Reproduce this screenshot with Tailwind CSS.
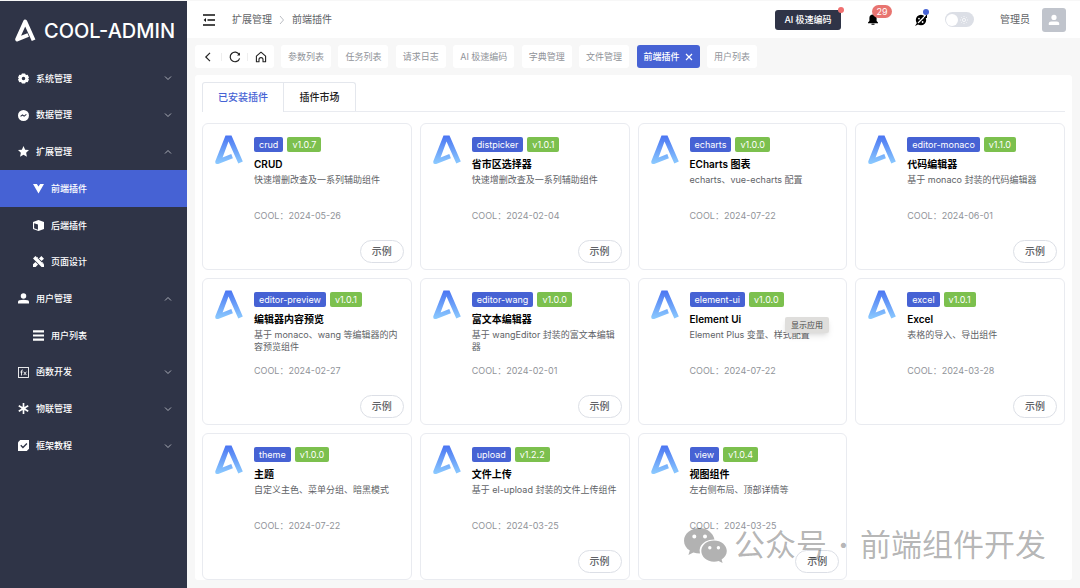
<!DOCTYPE html>
<html lang="zh-CN">
<head>
    <meta charset="UTF-8">
    <meta name="viewport" content="width=device-width, initial-scale=1.0">
    <title>COOL-ADMIN</title>
    <script src="https://cdn.jsdelivr.net/npm/@tailwindcss/browser@4"></script>
</head>
<body class="relative flex min-h-screen bg-[#f7f7f7] font-['Inter','Noto_Sans_CJK_SC',sans-serif] text-[9px] text-[#606266] overflow-x-hidden">
    <svg class="absolute size-0">
        <defs>
            <linearGradient id="logo-fill" x1="0" y1="0" x2="0" y2="1">
                <stop offset="0" stop-color="#4a74f2"/>
                <stop offset="1" stop-color="#8ccbff"/>
            </linearGradient>
            <symbol id="down" viewBox="0 0 8 8"><path d="M1 2.5l3 3 3-3" fill="none" stroke="currentColor" stroke-width=".8"/></symbol>
            <symbol id="up" viewBox="0 0 8 8"><path d="M1 5.5l3-3 3 3" fill="none" stroke="currentColor" stroke-width=".8"/></symbol>
        </defs>
    </svg>

    <aside class="w-[187px] shrink-0 bg-[#2f3447] text-white mt-px">
        <a href="#" class="flex items-center h-[59px] px-[15px] gap-2 text-[20px] font-medium whitespace-nowrap">
            <svg class="w-[21px] h-[23px] shrink-0" viewBox="0 0 21 23" fill="none" stroke="#fff" stroke-width="4" stroke-linejoin="round"><path d="M13.2 16L2.2 20.4 10.2 2.6 18.6 21.2"/></svg>
            COOL-ADMIN
        </a>
        <nav id="menu" class="grid auto-rows-fr h-[404px] font-medium"></nav>
    </aside>

    <div class="flex-1 min-w-0 flex flex-col mt-px">
        <header class="flex items-center h-[37px] bg-white pl-4 pr-[14px]">
            <button aria-label="折叠菜单" class="mr-[17px]">
                <svg class="w-3 h-3" viewBox="0 0 12 12" fill="none" stroke="#111" stroke-width="1.6"><path d="M0 1h12M4.5 6H12M0 11h12"/><path d="M3 4v4L.6 6z" fill="#111" stroke="none"/></svg>
            </button>
            <div class="flex items-center text-[10px]">
                <span>扩展管理</span>
                <svg class="w-2 h-2 mx-[6px] text-[#a8abb2]" viewBox="0 0 8 8"><path d="M2 0l3.5 4L2 8" fill="none" stroke="currentColor" stroke-width=".8"/></svg>
                <span>前端插件</span>
            </div>
            <div class="flex items-center ml-auto">
                <button class="relative bg-[#2f3447] text-white rounded-[3px] h-5 w-[66px] font-medium">AI 极速编码
                    <span class="absolute -top-[3px] -right-[3px] size-[6px] rounded-full bg-[#f07070]"></span>
                </button>
                <button aria-label="通知" class="relative ml-[27px]">
                    <svg class="w-[10px] h-[11px]" viewBox="0 0 10 11" fill="#000"><path d="M5 .5a3.6 3.6 0 0 1 3.6 3.6v3L10 8.6v.6H0v-.6l1.4-1.5v-3A3.6 3.6 0 0 1 5 .5zM3.5 9.8h3v.9h-3z"/></svg>
                    <span class="absolute -top-[9px] left-1 h-[13px] w-5 flex items-center justify-center rounded-full bg-[#e87470] text-white">29</span>
                </button>
                <button aria-label="主题" class="relative ml-[37px]">
                    <svg class="size-3" viewBox="0 0 12 12"><circle cx="6" cy="6" r="5.2" fill="#000"/><path d="M.5 11.5L11.5.5" stroke="#fff" stroke-width="1.2"/><path d="M0 12l2.5-4L4 10zM9 4l3-4v4z" fill="#000"/><circle cx="4" cy="4.6" r=".9" fill="#fff"/><circle cx="7.6" cy="8" r=".9" fill="#fff"/></svg>
                    <span class="absolute -top-[5px] -right-[2px] size-[6px] rounded-full bg-[#4662d4]"></span>
                </button>
                <button role="switch" aria-checked="false" aria-label="暗黑模式" class="ml-[18px] flex items-center justify-between w-[29px] h-[15px] rounded-full bg-[#dcdfe6] px-px">
                    <span class="size-3 rounded-full bg-white"></span>
                    <svg class="size-2 mr-[5px]" viewBox="0 0 8 8" fill="none" stroke="#fff" stroke-width=".7"><circle cx="4" cy="4" r="1.6"/><path d="M4 0v1M4 7v1M0 4h1M7 4h1M1.2 1.2l.7.7M6.1 6.1l.7.7M1.2 6.8l.7-.7M6.1 1.9l.7-.7"/></svg>
                </button>
                <span class="ml-[26px] text-[10px]">管理员</span>
                <span class="ml-3 size-6 rounded-[3px] bg-[#c0c4cc] flex items-center justify-center">
                    <svg class="size-3" viewBox="0 0 12 12" fill="#fff"><circle cx="6" cy="3.4" r="2.6"/><path d="M.8 11V9.6Q.8 7.4 3.2 7.4h5.6q2.4 0 2.4 2.2V11z"/></svg>
                </span>
            </div>
        </header>

        <div class="flex gap-[7px] px-2 py-[7px] text-[#909399]">
            <div class="flex items-center justify-between bg-white rounded-[3px] h-[23px] w-[79px] px-[7px] text-[#222]">
                <button aria-label="后退"><svg class="size-3" viewBox="0 0 12 12" fill="none" stroke="currentColor" stroke-width="1.2"><path d="M8 1.8L3.8 6 8 10.2"/></svg></button>
                <span class="w-px h-2 bg-[#eee]"></span>
                <button aria-label="刷新"><svg class="size-3" viewBox="0 0 12 12" fill="none" stroke="currentColor" stroke-width="1.2"><path d="M10.6 7.3A4.8 4.8 0 1 1 10.2 3.6"/><path d="M11 1.6v3H8z" fill="currentColor" stroke="none"/></svg></button>
                <span class="w-px h-2 bg-[#eee]"></span>
                <button aria-label="首页"><svg class="size-3" viewBox="0 0 12 12" fill="none" stroke="currentColor" stroke-width="1.1" stroke-linejoin="round"><path d="M1.400 5.200L6 1.200l4.600 4V10.800H8V8.600a2 2 0 0 0-4 0v2.200H1.400z"/></svg></button>
            </div>
            <nav id="tabs" class="flex justify-between w-[476px]"></nav>
        </div>

        <main class="mx-2 mb-2 px-[7px] pt-[7px] bg-white rounded-[3px]">
            <div class="flex border-b border-[#e9ebf0] text-[10px] font-medium mb-[11px]">
                <button class="h-[30px] w-[82px] -mb-px bg-white border border-b-0 border-[#e4e7ed] rounded-tl-[3px] text-[#4662d4]">已安装插件</button>
                <button class="h-[29px] w-[72px] border border-l-0 border-b-0 border-[#e4e7ed] rounded-tr-[3px] text-[#222]">插件市场</button>
            </div>
            <div id="plugins" class="grid grid-cols-4 gap-2"></div>
        </main>
    </div>

    <div class="absolute left-[785px] top-[317px] h-4 px-[6px] flex items-center bg-[#dfdedc] text-[#444] rounded-xs shadow-md text-[8px]">显示应用</div>

    <div class="absolute left-[684px] top-[523px] flex items-center text-[31px] leading-[44px] text-black/30 whitespace-nowrap">
        <svg class="w-[43px] h-9 mr-[7px]" viewBox="0 0 43 36" fill="currentColor">
            <path fill-rule="evenodd" d="M15.500 1C7 1 0 6.600 0 13.700c0 4 2.200 7.500 5.800 9.900L4.400 28l5-2.600q3 1 6.600 1-1-3.200.2-6.200C18.500 15 24 12.200 30.500 12.400 29 5.800 23 1 15.500 1zM10.300 7.500a2 2 0 1 1 0 4 2 2 0 0 1 0-4zM21 7.500a2 2 0 1 1 0 4 2 2 0 0 1 0-4z"/>
            <path fill-rule="evenodd" d="M30 13.500c-7.200 0-12.700 4.800-12.700 10.600S22.800 34.700 30 34.700q2.600 0 4.600-.7l4 2-1-3.500c3.200-2 5.200-5 5.200-8.400 0-5.800-5.600-10.600-12.800-10.600zM25.800 19a1.700 1.700 0 1 1 0 3.400 1.700 1.700 0 0 1 0-3.400zM34.400 19a1.700 1.700 0 1 1 0 3.400 1.700 1.700 0 0 1 0-3.400z"/>
        </svg>
        <span>公众号</span>
        <span class="w-[33px] text-center font-bold">·</span>
        <span>前端组件开发</span>
    </div>

    <script>
        const icons = {
            gear: '<path fill-rule="evenodd" d="M3.600 0.500h2.800l.8 1.300 1.600-.1L10 4 9.200 5 10 6l-1.200 2.300-1.600-.1-.8 1.300H3.600l-.8-1.300-1.600.1L0 6l.8-1L0 4l1.200-2.300 1.600.1zM5 3.400a1.600 1.600 0 1 0 0 3.200 1.600 1.600 0 0 0 0-3.200z"/>',
            data: '<circle cx="5" cy="5" r="5"/><path d="M2.300 5.800l1.800-1.300 1.500 1.100 2-1.600" fill="none" stroke="#2f3447"/>',
            star: '<path d="M5 0l1.500 3.300 3.500.4-2.600 2.400.7 3.700L5 8l-3.100 1.800.7-3.700L0 3.700l3.500-.4z"/>',
            vue: '<path d="M0 .8h3.500L5 3.200 6.500.8H10L5 9.500z"/>',
            box: '<path fill-rule="evenodd" d="M5 0l5 1.800v6.400L5 10 0 8.200V1.800zM1 3v4.500L4.500 8.800V4.200z"/>',
            design: '<path d="M0 2.200L2.200 0 10 7.800V10H7.800zM7.600 0L10 2.400 7.800 4.600 5.400 2.200zM0 7.600l2.200-2.200 2.400 2.400L2.400 10H0z"/><path d="M3.400 0.800L4.600 2M8.400 5.600l1.200 1.200" stroke="#fff" stroke-width=".7"/>',
            user: '<circle cx="5" cy="2.800" r="2.500"/><path d="M0 9.500V8q0-1.800 5-1.800T10 8v1.500z"/>',
            list: '<path d="M0 .3h10v2H0zM0 4h10v2H0zM0 7.700h10v2H0z"/>',
            fx: '<rect x=".5" y=".5" width="9" height="9" fill="none" stroke="#fff" stroke-width=".8"/><path d="M4.400 2.700q-1.200-.3-1.200 1v4M2.200 4.600h2M5.200 4.300l2.400 3M7.600 4.300l-2.400 3" fill="none" stroke="#fff" stroke-width=".8"/>',
            snow: '<path d="M5 0v10M.7 2.500l8.600 5M.7 7.500l8.600-5" stroke="#fff" stroke-width="1.500"/><circle cx="5" cy="5" r="1.800"/>',
            check: '<path d="M2 0h8v8L8 10H0V2z"/><path d="M2.500 4.800l2 2 3.600-3.600" fill="none" stroke="#2f3447" stroke-width="1.200"/>'
        };

        // name, icon, arrow (entries without an arrow are sub items)
        const menu = [
            ['系统管理', 'gear', 'down'],
            ['数据管理', 'data', 'down'],
            ['扩展管理', 'star', 'up'],
            ['前端插件', 'vue', ''],
            ['后端插件', 'box', ''],
            ['页面设计', 'design', ''],
            ['用户管理', 'user', 'up'],
            ['用户列表', 'list', ''],
            ['函数开发', 'fx', 'down'],
            ['物联管理', 'snow', 'down'],
            ['框架教程', 'check', 'down']
        ];

        document.getElementById('menu').innerHTML = menu.map(([name, icon, arrow]) => `
            <a href="#" class="flex items-center pr-[15px] gap-[7px] ${arrow ? 'pl-[18px]' : 'pl-[33px]'} ${name === '前端插件' ? 'bg-[#4662d4]' : ''}">
                <svg class="size-[11px]" viewBox="0 0 10 10" fill="#fff">${icons[icon]}</svg>
                <span>${name}</span>
                ${arrow ? `<svg class="size-2 ml-auto text-[#c8cad2]"><use href="#${arrow}"/></svg>` : ''}
            </a>`).join('');

        const tabs = ['参数列表', '任务列表', '请求日志', 'AI 极速编码', '字典管理', '文件管理', '前端插件', '用户列表'];

        document.getElementById('tabs').innerHTML = tabs.map(name => name === '前端插件'
            ? `<a href="#" class="flex items-center gap-[5px] h-[23px] px-[7px] rounded-[3px] bg-[#4662d4] text-white font-medium">${name}
                <svg class="size-2" viewBox="0 0 8 8" stroke="#fff" stroke-width="1.200"><path d="M1 1l6 6M7 1L1 7"/></svg></a>`
            : `<a href="#" class="flex items-center h-[23px] px-[7px] rounded-[3px] bg-white">${name}</a>`).join('');

        const plugins = [
            ['crud', '1.0.7', 'CRUD', '快速增删改查及一系列辅助组件', '2024-05-26', true],
            ['distpicker', '1.0.1', '省市区选择器', '快速增删改查及一系列辅助组件', '2024-02-04', true],
            ['echarts', '1.0.0', 'ECharts 图表', 'echarts、vue-echarts 配置', '2024-07-22', false],
            ['editor-monaco', '1.1.0', '代码编辑器', '基于 monaco 封装的代码编辑器', '2024-06-01', true],
            ['editor-preview', '1.0.1', '编辑器内容预览', '基于 monaco、wang 等编辑器的内容预览组件', '2024-02-27', true],
            ['editor-wang', '1.0.0', '富文本编辑器', '基于 wangEditor 封装的富文本编辑器', '2024-02-01', true],
            ['element-ui', '1.0.0', 'Element Ui', 'Element Plus 变量、样式配置', '2024-07-22', false],
            ['excel', '1.0.1', 'Excel', '表格的导入、导出组件', '2024-03-28', true],
            ['theme', '1.0.0', '主题', '自定义主色、菜单分组、暗黑模式', '2024-07-22', false],
            ['upload', '1.2.2', '文件上传', '基于 el-upload 封装的文件上传组件', '2024-03-25', true],
            ['view', '1.0.4', '视图组件', '左右侧布局、顶部详情等', '2024-03-25', true]
        ];

        document.getElementById('plugins').innerHTML = plugins.map(([key, version, title, desc, date, demo]) => `
            <article class="flex h-[147px] border border-[#e9ebf0] rounded-md pl-3 pr-[7px] pt-[10px] pb-[6px]">
                <svg class="w-7 h-[30px] mt-px mr-[11px] shrink-0" viewBox="0 0 28 30"><path fill="url(#logo-fill)" d="M10.500 .5h6L27.800 26.600 23.300 28.600 13.500 6.500 7.600 22.600 16.300 19 17.900 23.200 3.200 29Q-.4 29.600.4 26z"/></svg>
                <div class="flex-1 min-w-0 flex flex-col">
                    <div class="flex gap-1 mt-[3px] text-white">
                        <span class="h-[15px] leading-[15px] px-[5px] rounded-[2px] bg-[#4662d4]">${key}</span>
                        <span class="h-[15px] leading-[15px] px-[5px] rounded-[2px] bg-[#7cc04e]">v${version}</span>
                    </div>
                    <h2 class="mt-[5px] text-[10px] leading-[14px] font-semibold text-black">${title}</h2>
                    <p class="mt-[3px] h-6 leading-[12px]">${desc}</p>
                    <p class="mt-3 leading-[12px] text-[#909399]">COOL：${date}</p>
                    ${demo ? '<button class="mt-auto self-end w-11 h-[23px] rounded-full border border-[#dcdfe6] bg-white text-[10px] font-medium">示例</button>' : ''}
                </div>
            </article>`).join('');
    </script>
</body>
</html>
